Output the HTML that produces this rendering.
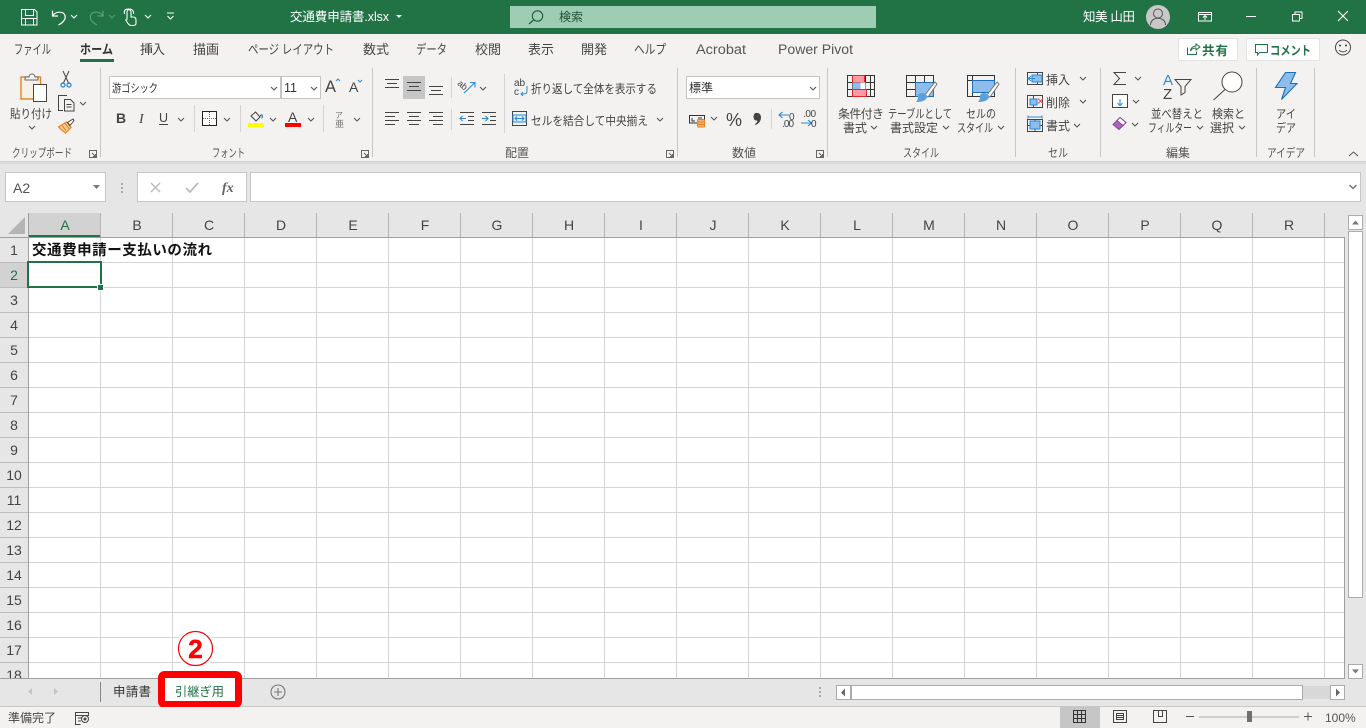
<!DOCTYPE html>
<html lang="ja"><head><meta charset="utf-8"><title>交通費申請書.xlsx</title>
<style>
html,body{margin:0;padding:0;width:1366px;height:728px;overflow:hidden;background:#e6e6e6}
svg{display:block}
text{font-family:"Liberation Sans","Noto Sans CJK JP",sans-serif;font-size:12px;fill:#444;white-space:pre}
.j{font-size:12px;fill:#444}
.g{font-size:12px;fill:#555}
.tab{font-size:13px;fill:#444}
.lat{font-size:13.500px;fill:#555}
.h{font-size:14px;fill:#444;text-anchor:middle}
.w{fill:#fff;font-size:12.500px}
</style></head><body>
<svg width="1366" height="728" viewBox="0 0 1366 728" xmlns="http://www.w3.org/2000/svg">
<defs>
<path id="c" d="M0 0l3 3 3-3" fill="none" stroke="#555" stroke-width="1.100"/>
<path id="cw" d="M0 0l3 3 3-3" fill="none" stroke="#fff" stroke-width="1.100"/>
</defs>
<!-- base -->
<rect width="1366" height="728" fill="#e6e6e6"/>
<rect width="1366" height="34" fill="#217346"/>
<rect y="34" width="1366" height="127" fill="#f3f2f1"/>
<rect y="161" width="1366" height="1" fill="#cfcfcf"/>
<rect y="162" width="1366" height="2" fill="#dcdcdc"/>
<!-- QAT -->
<path d="M21.500 9.500h13l2.500 2.500v13h-15.500zM25.500 9.500v6h8v-6M25.500 25v-6.500h8V25M22 18.500h15" fill="none" stroke="#fff"/>
<path d="M52.500 10.500v5.500h5.500M52.500 16c3-5 11-5 12.500-.500 1 4-2.500 7.500-6.500 9.500" fill="none" stroke="#fff" stroke-width="1.200"/>
<use href="#cw" x="71" y="15"/>
<path d="M103 10.500v5.500h-5.500M103 16c-3-5-11-5-12.500-.500-1 4 2.500 7.500 6.500 9.500" fill="none" stroke="#5f9b7c" stroke-width="1.200"/>
<path d="M109 15l3 3 3-3" fill="none" stroke="#5f9b7c"/>
<path d="M127 20v-8c0-3 4-3 4 0v5h2c2 0 3 1 3 3v3c0 2-1 2.500-3 2.500h-2c-2 0-3-2-4-3.500l-1.500-2.500M124.500 14c-1-5 2-5 4.500-5s5 1 4.500 5" fill="none" stroke="#fff" stroke-width="1.100"/>
<use href="#cw" x="145" y="15"/>
<path d="M167 13h7M167.500 16l3 3 3-3" fill="none" stroke="#fff"/>
<text x="290" y="21" class="w" textLength="99">交通費申請書.xlsx</text>
<path d="M396 15h6l-3 3z" fill="#fff"/>
<!-- search -->
<rect x="510" y="6" width="366" height="22" fill="#9fcdb3"/>
<circle cx="537.500" cy="16" r="5.200" fill="none" stroke="#1f5c3f" stroke-width="1.100"/>
<path d="M533.500 20l-4.500 4" stroke="#1f5c3f" stroke-width="1.200"/>
<text x="559" y="21" style="font-size:12px;fill:#1f5138">検索</text>
<!-- user -->
<text x="1083" y="21" class="w" textLength="52">知美 山田</text>
<circle cx="1158" cy="17" r="12" fill="#c8c8c8"/>
<circle cx="1158" cy="13.500" r="4.500" fill="none" stroke="#555"/>
<path d="M1150.500 25c0-9 15-9 15 0" fill="none" stroke="#555"/>
<path d="M1198.500 12.500h13v8.500h-13zM1198.500 14.500h13M1205 20v-4M1203 17.500l2-2 2 2" fill="none" stroke="#fff"/>
<rect x="1246" y="16" width="10" height="1" fill="#fff"/>
<path d="M1292.500 14.500h7v6.500h-7zM1295 14.500v-2.500h7v6.500h-2.500" fill="none" stroke="#fff"/>
<path d="M1338 11l10 10M1348 11l-10 10" stroke="#fff" stroke-width="1.100"/>
<!-- tabs -->
<text class="tab" x="14" y="54" textLength="37" lengthAdjust="spacingAndGlyphs">ファイル</text>
<text class="tab" x="80" y="54" textLength="33" lengthAdjust="spacingAndGlyphs" style="font-weight:bold;fill:#333">ホーム</text>
<text class="tab" x="140" y="54" textLength="25">挿入</text>
<text class="tab" x="193" y="54" textLength="26">描画</text>
<text class="tab" x="248" y="54" textLength="86" lengthAdjust="spacingAndGlyphs">ページ レイアウト</text>
<text class="tab" x="363" y="54" textLength="26">数式</text>
<text class="tab" x="416" y="54" textLength="31" lengthAdjust="spacingAndGlyphs">データ</text>
<text class="tab" x="475" y="54" textLength="26">校閲</text>
<text class="tab" x="528" y="54" textLength="26">表示</text>
<text class="tab" x="581" y="54" textLength="26">開発</text>
<text class="tab" x="634" y="54" textLength="32" lengthAdjust="spacingAndGlyphs">ヘルプ</text>
<text class="lat" x="696" y="54" textLength="50" lengthAdjust="spacingAndGlyphs">Acrobat</text>
<text class="lat" x="778" y="54" textLength="75" lengthAdjust="spacingAndGlyphs">Power Pivot</text>
<rect x="80" y="59" width="34" height="3" fill="#217346"/>
<!-- share buttons -->
<rect x="1178.500" y="38.500" width="59" height="22" rx="1" fill="#fff" stroke="#e4e3e2"/>
<rect x="1246.500" y="38.500" width="73" height="22" rx="1" fill="#fff" stroke="#e4e3e2"/>
<path d="M1187.500 47.500v7h9v-3M1190.500 51c0-3 3-5 5.500-5v-2l4 3-4 3v-2c-2.500 0-4.500 1-5.500 3" fill="none" stroke="#217346"/>
<text x="1202" y="55" style="font-size:12.500px;font-weight:bold;fill:#217346" textLength="26">共有</text>
<path d="M1255.500 44.500h12v8h-8l-2 2.500v-2.500h-2z" fill="none" stroke="#217346"/>
<text x="1270" y="55" style="font-size:12.500px;font-weight:bold;fill:#217346" textLength="41" lengthAdjust="spacingAndGlyphs">コメント</text>
<circle cx="1343" cy="47.500" r="7.500" fill="none" stroke="#444"/>
<circle cx="1340" cy="45.500" r="1" fill="#444"/><circle cx="1346" cy="45.500" r="1" fill="#444"/>
<path d="M1339 50c2 2.500 6 2.500 8 0" fill="none" stroke="#444"/>
<!-- group dividers -->
<g fill="#c8c6c4"><rect x="100" y="68" width="1" height="89"/><rect x="372" y="68" width="1" height="89"/><rect x="677" y="68" width="1" height="89"/><rect x="827" y="68" width="1" height="89"/><rect x="1015" y="68" width="1" height="89"/><rect x="1100" y="68" width="1" height="89"/><rect x="1256" y="68" width="1" height="89"/><rect x="1314" y="68" width="1" height="89"/></g>
<!-- group labels -->
<text class="g" x="12" y="157" textLength="60" lengthAdjust="spacingAndGlyphs">クリップボード</text>
<text class="g" x="212" y="157" textLength="33" lengthAdjust="spacingAndGlyphs">フォント</text>
<text class="g" x="505" y="157" textLength="24">配置</text>
<text class="g" x="732" y="157" textLength="24">数値</text>
<text class="g" x="903" y="157" textLength="36" lengthAdjust="spacingAndGlyphs">スタイル</text>
<text class="g" x="1048" y="157" textLength="20" lengthAdjust="spacingAndGlyphs">セル</text>
<text class="g" x="1166" y="157" textLength="24">編集</text>
<text class="g" x="1267" y="157" textLength="38" lengthAdjust="spacingAndGlyphs">アイデア</text>
<!-- launchers -->
<g fill="none" stroke="#666"><path d="M89.500 150.500h7v7h-7zM92 153l3.500 3.500M95.500 154v2.500H93"/><path d="M361.500 150.500h7v7h-7zM364 153l3.500 3.500M367.500 154v2.500H365"/><path d="M666.500 150.500h7v7h-7zM669 153l3.500 3.500M672.500 154v2.500H670"/><path d="M816.500 150.500h7v7h-7zM819 153l3.500 3.500M822.500 154v2.500H820"/></g>
<path d="M1349 156l4.500-4 4.500 4" fill="none" stroke="#555"/>
<!-- clipboard -->
<rect x="21" y="77" width="19.500" height="22" fill="#f7f0e6" stroke="#e6821e" stroke-width="1.400"/>
<path d="M25 80v-3h4c0-4 6-4 6 0h3v3z" fill="#f3f2f1" stroke="#666"/>
<rect x="33.500" y="84.500" width="13" height="17" fill="#fff" stroke="#444"/>
<text class="j" x="10" y="118" textLength="42" lengthAdjust="spacingAndGlyphs">貼り付け</text>
<use href="#c" x="29" y="126"/>
<!-- scissors -->
<path d="M63 71l6 13M69 71l-6 13" stroke="#444" fill="none"/>
<circle cx="63" cy="85" r="2" fill="none" stroke="#2b88d8" stroke-width="1.300"/><circle cx="69" cy="85" r="2" fill="none" stroke="#2b88d8" stroke-width="1.300"/>
<!-- copy -->
<path d="M63 110.500h-4.500v-15H67M64.500 99.500h6l3.500 3.500v8h-9.500zM66.500 104.500h5M66.500 107h5" fill="none" stroke="#444"/>
<use href="#c" x="80" y="102"/>
<!-- brush -->
<path d="M58.500 127l8-5 4.500 5.500-5.500 5.500zM62 125.500l4 5M65 123.500l4 5" fill="#f9d3a6" stroke="#e6821e" stroke-width="1.200"/>
<path d="M67.500 122.500l5.500-3.500 1 1.500-4 5z" fill="#fff" stroke="#444"/>
<!-- font -->
<rect x="109.500" y="76.500" width="171" height="22" fill="#fff" stroke="#c4c4c4"/>
<rect x="281.500" y="76.500" width="39" height="22" fill="#fff" stroke="#c4c4c4"/>
<text x="112" y="92" style="font-size:11.500px;fill:#333" textLength="46" lengthAdjust="spacingAndGlyphs">游ゴシック</text>
<text x="284" y="92" style="font-size:12.500px;fill:#333">11</text>
<use href="#c" x="271" y="87"/><use href="#c" x="311" y="87"/>
<text x="325" y="92" style="font-size:17px;fill:#444" textLength="11" lengthAdjust="spacingAndGlyphs">A</text><path d="M336 81l2-2 2 2" fill="none" stroke="#2b88d8"/>
<text x="349" y="92" style="font-size:14px;fill:#444">A</text><path d="M358 80l2 2 2-2" fill="none" stroke="#2b88d8"/>
<text x="116" y="123" style="font-size:14px;font-weight:bold;fill:#444">B</text>
<text x="139" y="123" style="font-size:14px;font-style:italic;fill:#444;font-family:'Liberation Serif',serif">I</text>
<text x="159" y="122" style="font-size:12.500px;fill:#444">U</text><rect x="159" y="124" width="9" height="1" fill="#444"/>
<use href="#c" x="178" y="118"/>
<rect x="194" y="105" width="1" height="27" fill="#d4d3d2"/>
<rect x="202.500" y="111.500" width="14" height="14" fill="#fff" stroke="#222"/>
<path d="M209.500 112v13M203 118.500h13" stroke="#666" stroke-dasharray="1 1"/>
<use href="#c" x="224" y="118"/>
<rect x="240" y="105" width="1" height="27" fill="#d4d3d2"/>
<path d="M251 116l4.500-4 4.500 5-4 4z" fill="none" stroke="#444"/><path d="M260 116c1-1 1.500-1.500 2-1 .5 1 .5 3-.5 3" fill="none" stroke="#1e6fb5" stroke-width="1.200"/>
<rect x="248" y="123" width="16" height="4" fill="#ffff00"/>
<use href="#c" x="270" y="118"/>
<text x="288" y="122" style="font-size:14px;fill:#444">A</text>
<rect x="285" y="123" width="16" height="4" fill="#ff0000"/>
<use href="#c" x="308" y="118"/>
<rect x="323" y="105" width="1" height="27" fill="#d4d3d2"/>
<text x="335" y="118" style="font-size:8px;fill:#777">ア</text>
<text x="335" y="127" style="font-size:9px;fill:#777">亜</text>
<use href="#c" x="354" y="118"/>
<!-- align -->
<rect x="403" y="76" width="22" height="23" fill="#c6c6c6"/>
<path d="M385 79.500h14M387 83.500h10M385 87.500h14M407 82.500h14M409 86.500h10M407 90.500h14M429 86.500h14M431 90.500h10M429 94.500h14" stroke="#444" fill="none"/>
<path d="M385 112.500h14M385 116.500h10M385 120.500h14M385 124.500h10M407 112.500h14M409 116.500h10M407 120.500h14M409 124.500h10M429 112.500h14M433 116.500h10M429 120.500h14M433 124.500h10" stroke="#444" fill="none"/>
<rect x="451" y="77" width="1" height="21" fill="#d4d3d2"/><rect x="451" y="109" width="1" height="21" fill="#d4d3d2"/>
<text x="458" y="89" style="font-size:9px;fill:#444" transform="rotate(40 464 85)">ab</text>
<path d="M464 93l10.500-10M470 82.500h5v5" fill="none" stroke="#2b88d8" stroke-width="1.100"/>
<use href="#c" x="480" y="87"/>
<path d="M460 112.500h14M468 116.500h6M468 120.500h6M460 124.500h14" stroke="#444" fill="none"/>
<path d="M466 118.500h-5.500M462.500 116l-2.500 2.500 2.500 2.500" stroke="#2b88d8" fill="none" stroke-width="1.100"/>
<path d="M482 112.500h14M490 116.500h6M490 120.500h6M482 124.500h14" stroke="#444" fill="none"/>
<path d="M482 118.500h5.500M485.500 116l2.500 2.500-2.500 2.500" stroke="#2b88d8" fill="none" stroke-width="1.100"/>
<rect x="504" y="74" width="1" height="59" fill="#d4d3d2"/>
<text x="514" y="86" style="font-size:10px;fill:#444">ab</text>
<text x="514" y="95" style="font-size:10px;fill:#444">c</text>
<path d="M527 86v5c0 3-2 3-6 3M523 92l-2 2 2 2" fill="none" stroke="#2b88d8"/>
<text class="j" x="531" y="93" textLength="126" lengthAdjust="spacingAndGlyphs">折り返して全体を表示する</text>
<rect x="512.500" y="111.500" width="14" height="14" fill="none" stroke="#444"/>
<rect x="513" y="115" width="13" height="7" fill="#dcecf8" stroke="#2b88d8"/>
<path d="M515 118.500h9M517 116.500l-2 2 2 2M522 116.500l2 2-2 2" fill="none" stroke="#2b88d8"/>
<text class="j" x="531" y="125" textLength="117" lengthAdjust="spacingAndGlyphs">セルを結合して中央揃え</text>
<use href="#c" x="657" y="118"/>
<!-- number -->
<rect x="686.500" y="76.500" width="133" height="22" fill="#fff" stroke="#c4c4c4"/>
<text x="689" y="92" style="font-size:12px;fill:#333" textLength="24">標準</text>
<use href="#c" x="810" y="87"/>
<path d="M689.500 115.500h15v7.500h-15zM692 118v3h3M698 118h4" fill="none" stroke="#333"/>
<rect x="697.500" y="119.500" width="7" height="7.500" rx="1" fill="#f7b27a" stroke="#e6821e"/>
<path d="M698 122h6M698 124.500h6" stroke="#e6821e"/>
<use href="#c" x="711" y="117"/>
<text x="726" y="126" style="font-size:18px;fill:#444">%</text>
<path d="M755.500 113c3-.500 5.500 1 5.500 4.500 0 3.500-2.500 6.500-5.500 7.500l-.500-1c1.500-1 2.300-2.300 2.500-3.500-2 .500-4-.800-4-3.500 0-2 1-3.700 2-4z" fill="#444"/>
<rect x="771" y="109" width="1" height="20" fill="#d4d3d2"/>
<path d="M789 115h-10M782.500 112l-3.500 3 3.500 3" fill="none" stroke="#2b88d8" stroke-width="1.100"/>
<text x="789" y="120" style="font-size:10px;fill:#444">0</text>
<text x="782" y="127" style="font-size:10px;fill:#444" textLength="12">.00</text>
<text x="803" y="117" style="font-size:10px;fill:#444" textLength="13">.00</text>
<path d="M801 123h10M808 120l3.500 3-3.500 3" fill="none" stroke="#2b88d8" stroke-width="1.100"/>
<text x="811" y="127" style="font-size:10px;fill:#444">0</text>
<!-- styles -->
<g fill="none" stroke="#333"><path d="M847.500 75.500h27v21h-27zM852.500 75.500v21M865.500 75.500v21M870.500 75.500v21M847.500 82.500h27M847.500 89.500h27"/></g>
<rect x="852.500" y="75.500" width="12" height="7" fill="#ff9aa2" stroke="#d92a2a"/>
<rect x="852.500" y="82.500" width="8" height="7" fill="#8dbdea"/>
<rect x="860.500" y="82.500" width="5" height="7" fill="#fff"/>
<rect x="852.500" y="89.500" width="14" height="7" fill="#ff9aa2" stroke="#d92a2a"/>
<text class="j" x="838" y="118" textLength="46">条件付き</text>
<text class="j" x="843" y="132" textLength="24">書式</text><use href="#c" x="871" y="126"/>
<g fill="none" stroke="#333"><path d="M906.500 75.500h27v21h-27zM915.500 75.500v21M924.500 75.500v21M906.500 82.500h27M906.500 89.500h27"/></g>
<rect x="915.500" y="82.500" width="18" height="14" fill="#8dbdea" stroke="#1e6fb5"/>
<path d="M925 95l10-13 2 2-9 13z" fill="#fff" stroke="#777"/>
<path d="M922 93c3 0 5 2 5 4-1 4-6 5-11 5 2-2 2-4 2-6 0-2 2-3 4-3z" fill="#5b9fdb"/>
<text class="j" x="888" y="118" textLength="64" lengthAdjust="spacingAndGlyphs">テーブルとして</text>
<text class="j" x="890" y="132" textLength="48">書式設定</text><use href="#c" x="943" y="126"/>
<g fill="none" stroke="#333"><path d="M967.500 75.500h27v21h-27zM967.500 80.500h27M972.500 75.500v21"/></g>
<rect x="972.500" y="80.500" width="22" height="12" fill="#8dbdea" stroke="#1e6fb5"/>
<path d="M987 95l10-13 2 2-9 13z" fill="#fff" stroke="#777"/>
<path d="M984 93c3 0 5 2 5 4-1 4-6 5-11 5 2-2 2-4 2-6 0-2 2-3 4-3z" fill="#5b9fdb"/>
<text class="j" x="966" y="118" textLength="30" lengthAdjust="spacingAndGlyphs">セルの</text>
<text class="j" x="957" y="132" textLength="36" lengthAdjust="spacingAndGlyphs">スタイル</text><use href="#c" x="998" y="126"/>
<!-- cells -->
<path d="M1027.500 72.500h15v12h-15zM1027.500 78.500h15M1037.500 72.500v12" fill="none" stroke="#444"/>
<rect x="1032" y="75" width="10" height="7" fill="#8dbdea" stroke="#2b88d8"/>
<path d="M1035 78.500h-7M1031 76l-3 2.500 3 2.500" fill="none" stroke="#2b88d8"/>
<text class="j" x="1046" y="84" textLength="24">挿入</text><use href="#c" x="1080" y="77"/>
<path d="M1027.500 95.500h15v12h-15zM1033.500 95.500v12" fill="none" stroke="#444"/>
<rect x="1030" y="99" width="7" height="6" fill="#8dbdea" stroke="#2b88d8"/>
<path d="M1038 98.500l5 5M1043 98.500l-5 5" stroke="#e84a4a"/>
<text class="j" x="1046" y="107" textLength="24">削除</text><use href="#c" x="1080" y="100"/>
<path d="M1027.500 119.500h15v12h-15zM1027.500 125.500h15M1035 119.500v12" fill="none" stroke="#444"/>
<rect x="1030" y="121" width="10" height="8" fill="#8dbdea" stroke="#2b88d8"/>
<path d="M1028 117h14M1028 115.500v3M1042 115.500v3" stroke="#2b88d8" fill="none"/>
<text class="j" x="1046" y="130" textLength="24">書式</text><use href="#c" x="1074" y="124"/>
<!-- edit -->
<path d="M1126 72.500h-12l5.500 6-5.500 6h12" fill="none" stroke="#444"/>
<use href="#c" x="1135" y="77"/>
<rect x="1112.500" y="94.500" width="15" height="13" fill="#fff" stroke="#444"/>
<path d="M1120 99v6M1117.500 103l2.500 2.500 2.500-2.500" fill="none" stroke="#2b88d8"/>
<use href="#c" x="1133" y="100"/>
<path d="M1113 124.500l7-7 6 5-7 7z" fill="#b062c0" stroke="#8a3f9c"/>
<path d="M1117 120.500l3-3 6 5-3 3z" fill="#fff" stroke="#8a3f9c"/>
<use href="#c" x="1132" y="123"/>
<text x="1163" y="85" style="font-size:15px;fill:#2b88d8">A</text>
<text x="1163" y="99" style="font-size:15px;fill:#444">Z</text>
<path d="M1175 79.500h16l-6 7v6l-4 2.500v-8.500z" fill="none" stroke="#444"/>
<text class="j" x="1151" y="118" textLength="52" lengthAdjust="spacingAndGlyphs">並べ替えと</text>
<text class="j" x="1148" y="132" textLength="44" lengthAdjust="spacingAndGlyphs">フィルター</text><use href="#c" x="1197" y="126"/>
<circle cx="1232" cy="82" r="10" fill="#fff" stroke="#444"/>
<path d="M1225 89.500l-11.500 10.500" stroke="#444" fill="none"/>
<text class="j" x="1212" y="118" textLength="33" lengthAdjust="spacingAndGlyphs">検索と</text>
<text class="j" x="1210" y="132" textLength="24">選択</text><use href="#c" x="1239" y="126"/>
<!-- ideas -->
<path d="M1285.500 72.500h10l-5 11h6.500l-15.500 16 4-12h-10z" fill="#8dbdea" stroke="#1e6fb5" stroke-width="1.100"/>
<text class="j" x="1276" y="118" textLength="20" lengthAdjust="spacingAndGlyphs">アイ</text>
<text class="j" x="1276" y="132" textLength="20" lengthAdjust="spacingAndGlyphs">デア</text>
<!-- formula bar -->
<rect x="5.500" y="172.500" width="100" height="29" fill="#fff" stroke="#c6c6c6"/>
<text x="13" y="193" style="font-size:14px;fill:#555">A2</text>
<path d="M93 185h7l-3.500 4z" fill="#777"/>
<g fill="#aaa"><rect x="121" y="183" width="2" height="2"/><rect x="121" y="187" width="2" height="2"/><rect x="121" y="191" width="2" height="2"/></g>
<rect x="137.500" y="172.500" width="109" height="29" fill="#fff" stroke="#c6c6c6"/>
<path d="M151 183l9 9M160 183l-9 9" stroke="#bbb" stroke-width="1.500"/>
<path d="M186 188l4 4 8-9" fill="none" stroke="#bbb" stroke-width="1.800"/>
<text x="222" y="192" style="font-size:14px;font-style:italic;font-weight:bold;fill:#666;font-family:'Liberation Serif',serif">fx</text>
<rect x="250.500" y="172.500" width="1110" height="29" fill="#fff" stroke="#c6c6c6"/>
<path d="M1349.500 185l3.500 3.500 3.500-3.500" fill="none" stroke="#777" stroke-width="1.500"/>
<!-- grid -->
<rect x="29" y="238" width="1315" height="440" fill="#fff"/>
<path d="M100.500 238V678M172.500 238V678M244.500 238V678M316.500 238V678M388.500 238V678M460.500 238V678M532.500 238V678M604.500 238V678M676.500 238V678M748.500 238V678M820.500 238V678M892.500 238V678M964.500 238V678M1036.500 238V678M1108.500 238V678M1180.500 238V678M1252.500 238V678M1324.500 238V678M29 262.500H1344M29 287.500H1344M29 312.500H1344M29 337.500H1344M29 362.500H1344M29 387.500H1344M29 412.500H1344M29 437.500H1344M29 462.500H1344M29 487.500H1344M29 512.500H1344M29 537.500H1344M29 562.500H1344M29 587.500H1344M29 612.500H1344M29 637.500H1344M29 662.500H1344" stroke="#d4d4d4" fill="none"/>
<!-- headers -->
<rect x="29" y="213" width="72" height="24" fill="#d2d2d2"/>
<rect x="29" y="235" width="72" height="2" fill="#217346"/>
<rect x="0" y="263" width="28" height="25" fill="#d2d2d2"/>
<path d="M8 234l17-17v17z" fill="#b5b5b5"/>
<path d="M100.500 213V237M172.500 213V237M244.500 213V237M316.500 213V237M388.500 213V237M460.500 213V237M532.500 213V237M604.500 213V237M676.500 213V237M748.500 213V237M820.500 213V237M892.500 213V237M964.500 213V237M1036.500 213V237M1108.500 213V237M1180.500 213V237M1252.500 213V237M1324.500 213V237" stroke="#b4b4b4" fill="none"/>
<path d="M0 237.500H1344.500V678.500H0M28.500 213V678" stroke="#9e9e9e" fill="none"/>
<path d="M0 262.500h28M0 287.500h28M0 312.500h28M0 337.500h28M0 362.500h28M0 387.500h28M0 412.500h28M0 437.500h28M0 462.500h28M0 487.500h28M0 512.500h28M0 537.500h28M0 562.500h28M0 587.500h28M0 612.500h28M0 637.500h28M0 662.500h28" stroke="#bdbdbd" fill="none"/>
<text class="h" x="65" y="230" style="fill:#217346">A</text><text class="h" x="137" y="230">B</text><text class="h" x="209" y="230">C</text><text class="h" x="281" y="230">D</text><text class="h" x="353" y="230">E</text><text class="h" x="425" y="230">F</text><text class="h" x="497" y="230">G</text><text class="h" x="569" y="230">H</text><text class="h" x="641" y="230">I</text><text class="h" x="713" y="230">J</text><text class="h" x="785" y="230">K</text><text class="h" x="857" y="230">L</text><text class="h" x="929" y="230">M</text><text class="h" x="1001" y="230">N</text><text class="h" x="1073" y="230">O</text><text class="h" x="1145" y="230">P</text><text class="h" x="1217" y="230">Q</text><text class="h" x="1289" y="230">R</text>
<text class="h" x="14" y="255">1</text><text class="h" x="14" y="280" style="fill:#217346">2</text><text class="h" x="14" y="305">3</text><text class="h" x="14" y="330">4</text><text class="h" x="14" y="355">5</text><text class="h" x="14" y="380">6</text><text class="h" x="14" y="405">7</text><text class="h" x="14" y="430">8</text><text class="h" x="14" y="455">9</text><text class="h" x="14" y="480">10</text><text class="h" x="14" y="505">11</text><text class="h" x="14" y="530">12</text><text class="h" x="14" y="555">13</text><text class="h" x="14" y="580">14</text><text class="h" x="14" y="605">15</text><text class="h" x="14" y="630">16</text><text class="h" x="14" y="655">17</text>
<svg x="0" y="663" width="28" height="15"><text class="h" x="14" y="17">18</text></svg>
<text x="32" y="255" style="font-size:14.500px;font-weight:bold;fill:#111" textLength="180">交通費申請ー支払いの流れ</text>
<!-- selection -->
<rect x="28" y="262" width="73" height="25" fill="none" stroke="#217346" stroke-width="2"/>
<rect x="97" y="284" width="7" height="7" fill="#fff"/>
<rect x="98" y="285" width="5" height="5" fill="#217346"/>
<!-- vertical scrollbar -->
<rect x="1345" y="213" width="21" height="466" fill="#e6e6e6"/>
<rect x="1348.500" y="215.500" width="14" height="14" fill="#fff" stroke="#ababab"/>
<path d="M1352 224.500l3.500-4 3.500 4z" fill="#777"/>
<rect x="1348.500" y="231.500" width="14" height="366" fill="#fff" stroke="#ababab"/>
<rect x="1348.500" y="664.500" width="14" height="14" fill="#fff" stroke="#ababab"/>
<path d="M1352 669.500h7l-3.500 4z" fill="#777"/>
<!-- sheet bar -->
<rect y="679" width="1366" height="27" fill="#e6e6e6"/>
<rect y="706" width="1366" height="1" fill="#c8c8c8"/>
<path d="M32 688l-4 3.500 4 3.500zM54 688l4 3.500-4 3.500z" fill="#c4c4c4"/>
<rect x="100" y="682" width="1" height="20" fill="#888"/>
<text x="113" y="696" style="font-size:12.500px;fill:#333" textLength="38">申請書</text>
<circle cx="278" cy="692" r="7" fill="none" stroke="#777" stroke-width="1.100"/>
<path d="M274 692h8M278 688v8" stroke="#777" stroke-width="1.100"/>
<g fill="#aaa"><rect x="819" y="687" width="2" height="2"/><rect x="819" y="691" width="2" height="2"/><rect x="819" y="695" width="2" height="2"/></g>
<rect x="836.500" y="685.500" width="14" height="14" fill="#fff" stroke="#ababab"/>
<path d="M845 688.500l-4 4 4 4z" fill="#666"/>
<rect x="851.500" y="685.500" width="451" height="14" fill="#fff" stroke="#ababab"/>
<rect x="1303" y="686" width="28" height="13" fill="#d8d8d8"/>
<rect x="1330.500" y="685.500" width="14" height="14" fill="#fff" stroke="#ababab"/>
<path d="M1336 688.500l4 4-4 4z" fill="#666"/>
<!-- red box -->
<rect x="161.500" y="674.500" width="77" height="30" rx="3" fill="#fff" stroke="#ff0000" stroke-width="7"/>
<text x="175" y="696" style="font-size:12.500px;fill:#217346" textLength="49" lengthAdjust="spacingAndGlyphs">引継ぎ用</text>
<!-- callout -->
<circle cx="195.500" cy="648.500" r="20" fill="#fff" fill-opacity=".85"/>
<circle cx="195.500" cy="648.500" r="17" fill="#fff"/>
<circle cx="195.500" cy="648.500" r="17" fill="none" stroke="#ff0000" stroke-width="1.200"/>
<text x="195.500" y="658" style="font-size:26px;font-weight:bold;fill:#ff0000;stroke:#ff0000;stroke-width:.6;text-anchor:middle">2</text>
<!-- status -->
<rect y="707" width="1366" height="21" fill="#f3f2f1"/>
<text x="8" y="722" style="font-size:12px;fill:#444" textLength="48">準備完了</text>
<path d="M75.500 712.500h13v3h-13zM75.500 715.500v9h5M78 718h4M78 721h3" fill="none" stroke="#444"/>
<circle cx="85" cy="719" r="3.500" fill="none" stroke="#444"/><circle cx="85" cy="719" r="1.500" fill="#444"/>
<rect x="1060" y="707" width="40" height="21" fill="#c6c6c6"/>
<path d="M1073.500 710.500h12v12h-12zM1077.500 710.500v12M1081.500 710.500v12M1073.500 714.500h12M1073.500 718.500h12" fill="none" stroke="#333"/>
<path d="M1113.500 710.500h13v12h-13zM1116.500 713.500h7v6h-7zM1117 715.500h6M1117 717.500h6" fill="none" stroke="#444"/>
<path d="M1153.500 710.500h13v12h-13zM1158.500 710.500v6h4v-6" fill="none" stroke="#444"/>
<rect x="1186" y="716" width="8" height="1" fill="#555"/>
<rect x="1199" y="716.500" width="100" height="1" fill="#aaa"/>
<rect x="1247" y="711" width="5" height="11" fill="#707070"/>
<path d="M1304 716.500h8M1308 712.500v8" stroke="#555" fill="none"/>
<text x="1325" y="722" style="font-size:12px;fill:#555">100%</text>
</svg>
</body></html>
